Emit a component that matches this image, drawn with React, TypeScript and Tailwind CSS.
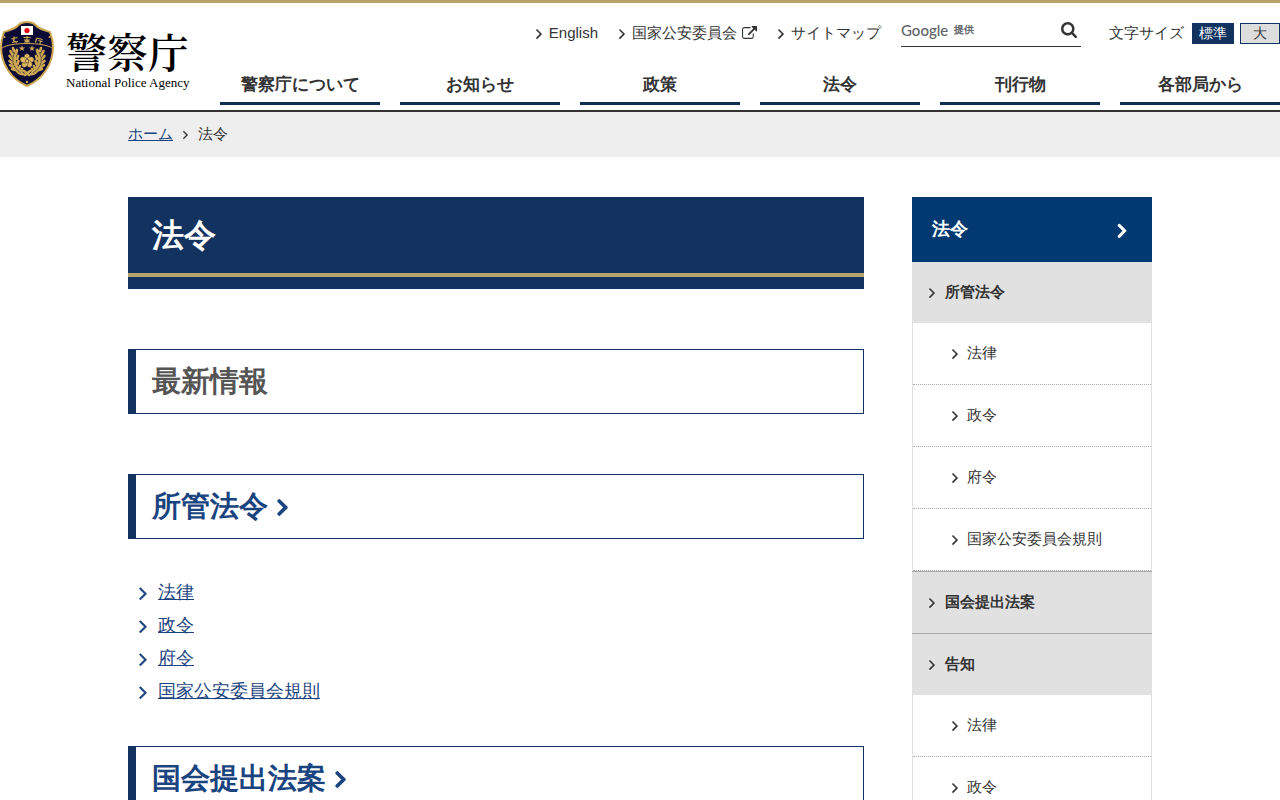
import React from "react";

function Angle({ className }: { className: string }) {
  return (
    <svg viewBox="0 320 608 1152" className={className} fill="currentColor" aria-hidden="true">
      <path d="M595 960q0 13-10 23l-466 466q-10 10-23 10t-23-10l-50-50q-10-10-10-23t10-23l393-393-393-393q-10-10-10-23t10-23l50-50q10-10 23-10t23 10l466 466q10 10 10 23z" stroke="currentColor" strokeWidth="50" />
    </svg>
  );
}

function BoldAngle({ className }: { className: string }) {
  return (
    <svg viewBox="-40 280 688 1232" className={className} fill="currentColor" aria-hidden="true">
      <path d="M595 960q0 13-10 23l-466 466q-10 10-23 10t-23-10l-50-50q-10-10-10-23t10-23l393-393-393-393q-10-10-10-23t10-23l50-50q10-10 23-10t23 10l466 466q10 10 10 23z" stroke="currentColor" strokeWidth="100" />
    </svg>
  );
}

function ExternalIcon() {
  return (
    <svg viewBox="0 0 1792 1664" className="h-[14px] w-[15px]" fill="currentColor" aria-hidden="true">
      <path d="M1408 928v320q0 119-84.5 203.5t-203.5 84.5h-832q-119 0-203.5-84.5t-84.5-203.5v-832q0-119 84.5-203.5t203.5-84.5h704q14 0 23 9t9 23v64q0 14-9 23t-23 9h-704q-66 0-113 47t-47 113v832q0 66 47 113t113 47h832q66 0 113-47t47-113v-320q0-14 9-23t23-9h64q14 0 23 9t9 23zm384-864v512q0 26-19 45t-45 19-45-19l-176-176-652 652q-10 10-23 10t-23-10l-114-114q-10-10-10-23t10-23l652-652-176-176q-19-19-19-45t19-45 45-19h512q26 0 45 19t19 45z" />
    </svg>
  );
}

function SearchIcon() {
  return (
    <svg viewBox="64 128 1664 1664" className="size-4" fill="currentColor" aria-hidden="true">
      <path d="M1216 832q0-185-131.5-316.5t-316.5-131.5-316.5 131.5-131.5 316.5 131.5 316.5 316.5 131.5 316.5-131.5 131.5-316.5zm512 832q0 52-38 90t-90 38q-54 0-90-38l-343-342q-179 124-399 124-143 0-273.5-55.5t-225-150-150-225-55.5-273.5 55.5-273.5 150-225 225-150 273.5-55.5 273.5 55.5 225 150 150 225 55.5 273.5q0 220-124 399l343 343q37 37 37 90z" />
    </svg>
  );
}

function Star({ x, y, r }: { x: number; y: number; r: number }) {
  return (
    <path
      transform={`translate(${x} ${y}) scale(${r})`}
      d="M0-1 .25-.32.95-.31.4.12.59.81 0 .42-.59.81-.4.12-.95-.31-.25-.32z"
      fill="#cda850"
    />
  );
}

function Emblem() {
  return (
    <svg viewBox="0 0 54 66" className="h-[66px] w-[54px] shrink-0" aria-hidden="true">
      <path
        d="M27 1c3.500 0 6.500 1 8.500 3C39 8 45 9.500 50 11c1.500 4 3 9 3 15 0 17-10 32-26 39C11 58 1 43 1 26 1 20 2.500 15 4 11 9 9.500 15 8 18.500 4 20.500 2 23.500 1 27 1z"
        fill="#0b0b36"
        stroke="#cda850"
        strokeWidth="2"
      />
      <path d="M2 27C10 21 44 21 52 27" fill="none" stroke="#cda850" strokeWidth="1" />
      <rect x="21" y="5" width="12" height="9" fill="#fff" />
      <circle cx="27" cy="9.500" r="2.600" fill="#e60012" />
      <g stroke="#cda850" strokeWidth="1.200" fill="none">
        <path d="M11.500 18l6-1.500M14 15.500v5.500M12 21.500l6-1M13 19.500l4 2" />
        <path d="M23.500 16.500h7M27 15V22M24 19h6M24.500 21.500l2-2M29.500 21.500l-2-2" />
        <path d="M36.500 17l6 1.500M36.500 17.500l-1 4M38.500 19.500l4 1M40.500 20l-.500 3" />
      </g>
      <g fill="#cda850">
        <circle cx="4.500" cy="16" r="1" />
        <circle cx="49.500" cy="16" r="1" />
        <circle cx="27" cy="61" r="1.200" />
      </g>
      <Star x={22} y={27.500} r={3.200} />
      <Star x={32} y={27.500} r={3.200} />
      {[false, true].map((flip) => (
        <g key={String(flip)} transform={flip ? "translate(54 0) scale(-1 1)" : undefined}>
          <path d="M17 27c-6 6-8 17 0 25 2 2 5 3 9 2-7-5-10-11-10-17 0-4 1-7 1-10z" fill="#cda850" />
          <path
            d="M14 30l-1-3M12.500 34l-2-4M12 38l-2.500-3M12 42l-2.500-2M13 46l-3-2M15 49l-3-1M16 33l1-4M17 38l1-3M17.500 43l1-3M21 52l1-4M25 54l5-4M19 48l1-3"
            stroke="#cda850"
            strokeWidth="2.600"
            strokeLinecap="round"
          />
          <path d="M15 31c-4 7-3 15 6 21" fill="none" stroke="#0b0b36" strokeWidth=".5" />
        </g>
      ))}
      <g fill="#dfb95c" stroke="#0b0b36" strokeWidth=".4">
        {[0, 72, 144, 216, 288].map((a) => (
          <ellipse key={a} cx="27" cy="36.500" rx="3" ry="3.800" transform={`rotate(${a} 27 40)`} />
        ))}
        <circle cx="27" cy="40" r="1.800" />
      </g>
    </svg>
  );
}

const navItems = ["警察庁について", "お知らせ", "政策", "法令", "刊行物", "各部局から"];

const laws = ["法律", "政令", "府令", "国家公安委員会規則"];

const sections = [
  { title: "所管法令", items: laws },
  { title: "国会提出法案", items: [] as string[] },
  { title: "告知", items: ["法律", "政令"] },
];

function Header() {
  return (
    <header className="flex items-start gap-[30px] border-t-3 border-b-2 border-t-[#b5a36a] border-b-[#333] pb-[5px]">
      <a href="#" className="flex w-[190px] shrink-0 items-start gap-3 pt-[18px] text-black">
        <Emblem />
        <span className="flex flex-col whitespace-nowrap pt-[6px]">
          <span className="font-['Noto_Serif_CJK_JP','Noto_Sans_CJK_JP',serif] text-[41px] leading-[48px] font-semibold">警察庁</span>
          <span className="font-['Liberation_Serif',serif] text-[13px] leading-4">National Police Agency</span>
        </span>
      </a>
      <div className="flex min-w-0 grow flex-col">
        <div className="flex items-start justify-end pt-4 text-[15px] leading-7">
          <ul className="flex gap-[21px] whitespace-nowrap pr-5">
            <li>
              <a href="#" className="flex items-center gap-[7px]">
                <Angle className="h-[11px] w-[6px]" />
                English
              </a>
            </li>
            <li>
              <a href="#" className="flex items-center gap-[7px]">
                <Angle className="h-[11px] w-[6px]" />
                <span className="flex items-center gap-[5px]">
                  国家公安委員会
                  <ExternalIcon />
                </span>
              </a>
            </li>
            <li>
              <a href="#" className="flex items-center gap-[7px]">
                <Angle className="h-[11px] w-[6px]" />
                サイトマップ
              </a>
            </li>
          </ul>
          <form className="mr-7 flex h-7 w-[180px] items-center border-b border-[#333] pb-[6px]">
            <label htmlFor="site-search" className="flex items-center gap-[6px] whitespace-nowrap text-[#5f6368]">
              <span className="font-['Lato',sans-serif] text-[15px] leading-5 font-medium">Google</span>
              <span className="text-[10px] leading-5 font-bold">提供</span>
            </label>
            <input id="site-search" type="text" className="min-w-0 grow bg-transparent text-[15px] outline-none" />
            <button type="button" aria-label="検索" className="pr-1">
              <SearchIcon />
            </button>
          </form>
          <div className="flex items-center gap-[6px] whitespace-nowrap">
            <span className="mr-[2px]">文字サイズ</span>
            <button type="button" className="h-[21px] w-[42px] border border-[#12335f] bg-[#12335f] text-[14px] leading-[19px] text-white">
              標準
            </button>
            <button type="button" className="h-[21px] w-10 border border-[#12335f] bg-[#ddd] text-[14px] leading-[19px]">
              大
            </button>
          </div>
        </div>
        <nav className="mt-[22px]">
          <ul className="grid grid-cols-6 gap-5">
            {navItems.map((item) => (
              <li key={item}>
                <a href="#" className="block border-b-3 border-[#0f3050] pb-[2px] text-center text-[17px] leading-[31px] font-bold whitespace-nowrap">
                  {item}
                </a>
              </li>
            ))}
          </ul>
        </nav>
      </div>
    </header>
  );
}

function SectionHeading({ title, link }: { title: string; link?: boolean }) {
  return (
    <h2 className="border border-l-8 border-[#12335f] px-4 py-[10px] text-[29px] leading-[43px] font-bold text-[#555]">
      {link ? (
        <a href="#" className="flex items-center gap-[9px] text-[#1a4480]">
          {title}
          <BoldAngle className="h-[19px] w-[11px]" />
        </a>
      ) : (
        title
      )}
    </h2>
  );
}

function Sidebar() {
  return (
    <aside className="text-[15px]">
      <a href="#" className="flex h-[65px] items-center justify-between bg-[#003a70] pr-[25px] pl-5 text-[18px] font-bold text-white">
        法令
        <BoldAngle className="h-4 w-[10px]" />
      </a>
      <ul>
        {sections.map((section) => (
          <li key={section.title} className="border-t border-[#aaa] first:border-t-0">
            <a href="#" className="flex h-[61px] items-center gap-[10px] bg-[#e1e1e1] pl-[17px] font-bold">
              <Angle className="h-[11px] w-[6px]" />
              {section.title}
            </a>
            {section.items.length > 0 && (
              <ul className="border-x border-[#e1e1e1]">
                {section.items.map((item) => (
                  <li key={item} className="border-b border-dotted border-[#aaa]">
                    <a href="#" className="flex h-[61px] items-center gap-[9px] pl-[39px]">
                      <Angle className="h-[11px] w-[6px]" />
                      {item}
                    </a>
                  </li>
                ))}
              </ul>
            )}
          </li>
        ))}
      </ul>
    </aside>
  );
}

export default function App() {
  return (
    <div lang="ja" className="min-h-screen bg-white font-['Liberation_Sans',sans-serif] text-[#333]">
      <Header />
      <nav aria-label="パンくず" className="bg-[#eee]">
        <ol className="mx-auto flex h-[45px] max-w-[1024px] items-center gap-[10px] text-[15px]">
          <li>
            <a href="#" className="text-[#1a4480] underline">
              ホーム
            </a>
          </li>
          <li className="flex items-center gap-[10px]">
            <Angle className="h-[9px] w-[5px]" />
            法令
          </li>
        </ol>
      </nav>
      <div className="mx-auto grid max-w-[1024px] grid-cols-[minmax(0,1fr)_240px] gap-12 pt-10">
        <main>
          <h1 className="border-b-12 border-[#12335f] text-[32px] leading-[48px] font-bold text-white">
            <span className="block border-b-4 border-[#b5a36a] bg-[#12335f] px-6 py-[14px]">法令</span>
          </h1>
          <div className="mt-[60px] flex flex-col gap-[60px]">
            <SectionHeading title="最新情報" />
            <section>
              <SectionHeading title="所管法令" link />
              <ul className="mt-[37px] mb-[-22px] pl-[11px] text-[18px] leading-[33px] text-[#1a4480]">
                {laws.map((law) => (
                  <li key={law} className="flex items-center gap-[11px]">
                    <Angle className="h-[14px] w-2" />
                    <a href="#" className="underline">
                      {law}
                    </a>
                  </li>
                ))}
              </ul>
            </section>
            <SectionHeading title="国会提出法案" link />
          </div>
        </main>
        <Sidebar />
      </div>
    </div>
  );
}
